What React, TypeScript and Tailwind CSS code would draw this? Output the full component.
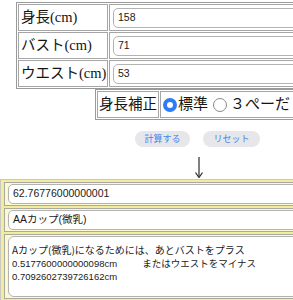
import React from "react";

const serif = { fontFamily: '"Liberation Serif", "Noto Sans CJK JP", serif' };
const sans = { fontFamily: '"Liberation Sans", "Noto Sans CJK JP", sans-serif' };
const cjk = { fontFamily: '"Noto Sans CJK JP", sans-serif' };

const inputRows = [
  { label: "身長(cm)", value: "158" },
  { label: "バスト(cm)", value: "71" },
  { label: "ウエスト(cm)", value: "53" },
];

const Field = ({ value }: { value: string }) => (
  <div
    className="h-[20px] w-full rounded-[5px] border border-[#b3b3b3] bg-white pl-[4px] flex items-center text-[10.5px] text-[#1a1a1a]"
    style={sans}
  >
    {value}
  </div>
);

const Num = ({ children }: { children: string }) => <span style={sans}>{children}</span>;

export default function App() {
  return (
    <div lang="ja" className="w-[293px] h-[300px] overflow-hidden bg-white">
      <div className="w-[395px]">
        {/* input table */}
        <div className="ml-[16px] mt-[2px] w-fit border border-[#9a9a9a] p-[1px] flex flex-col gap-[1px]">
          {inputRows.map((row) => (
            <div key={row.label} className="flex gap-[1px] h-[27px]">
              <div
                className="w-[90px] border border-[#a6a6a6] px-[2px] flex items-center text-[14.5px] text-[#151515] whitespace-nowrap overflow-hidden"
                style={serif}
              >
                {row.label}
              </div>
              <div className="w-[230px] border border-[#a6a6a6] px-[3px] flex items-center">
                <Field value={row.value} />
              </div>
            </div>
          ))}
        </div>

        {/* height correction */}
        <div className="ml-[95px] w-fit border border-[#9a9a9a] p-[1px] flex gap-[1px]">
          <div
            className="w-[62px] h-[27px] border border-[#a6a6a6] flex items-center justify-center text-[14.5px] text-[#151515] whitespace-nowrap"
            style={serif}
          >
            身長補正
          </div>
          <div
            className="w-[200px] h-[27px] border border-[#a6a6a6] pl-[2px] flex items-center text-[15px] text-[#151515] whitespace-nowrap"
            style={serif}
          >
            <span className="w-[14px] h-[14px] rounded-full border-[4px] border-[#2f7cf6] bg-white" />
            <span className="ml-[1px]">標準</span>
            <span className="ml-[5px] w-[14px] h-[14px] rounded-full border border-[#8a8a8a] bg-white" />
            <span className="ml-[3px]">３ぺーだ</span>
          </div>
        </div>

        {/* buttons */}
        <div className="mt-[11px] flex justify-center gap-[13px]">
          <button
            className="w-[55px] h-[16px] rounded-full bg-[#e6e6eb] text-[9px] text-[#3d86f0] flex items-center justify-center"
            style={cjk}
          >
            計算する
          </button>
          <button
            className="w-[57px] h-[16px] rounded-full bg-[#e6e6eb] text-[9px] text-[#3d86f0] flex items-center justify-center"
            style={cjk}
          >
            リセット
          </button>
        </div>

        {/* arrow */}
        <div className="mt-[10px] flex justify-center">
          <svg width="10" height="21" viewBox="0 0 10 21" className="ml-[3px]">
            <line x1="5" y1="0" x2="5" y2="19" stroke="#2a2a2a" strokeWidth="1.2" />
            <path d="M1.5 15.5 L5 20.5 L8.5 15.5" fill="none" stroke="#2a2a2a" strokeWidth="1.2" />
          </svg>
        </div>

        {/* results */}
        <div className="mt-[1px] border border-[#c9c9c2] bg-[#f2eca3] px-[3px] py-[2px] flex flex-col gap-[2px]">
          <div className="border border-[#a9a99c] bg-[#fbf8d6] px-[3px] py-[1px]">
            <Field value="62.76776000000001" />
          </div>
          <div className="border border-[#a9a99c] bg-[#fbf8d6] px-[3px] py-[1px]">
            <Field value="AAカップ(微乳)" />
          </div>
          <div className="border border-[#a9a99c] bg-[#fbf8d6] px-[3px] py-[1px]">
            <div
              className="h-[61px] rounded-[6px] border border-[#b3b3b3] bg-white pl-[3px] pt-[5px] text-[9.5px] leading-[13px] text-[#1a1a1a] whitespace-nowrap"
              style={cjk}
            >
              <div className="flex text-[10px] leading-[15px]">
                <span>Aカップ(微乳)になるためには、あとバストをプラス</span>
              </div>
              <div className="flex">
                <Num>0.5177600000000098cm</Num>
                <span className="inline-block w-[25px]" />
                <span>またはウエストをマイナス</span>
              </div>
              <div className="flex">
                <Num>0.7092602739726162cm</Num>
              </div>
            </div>
          </div>
        </div>
      </div>
    </div>
  );
}
